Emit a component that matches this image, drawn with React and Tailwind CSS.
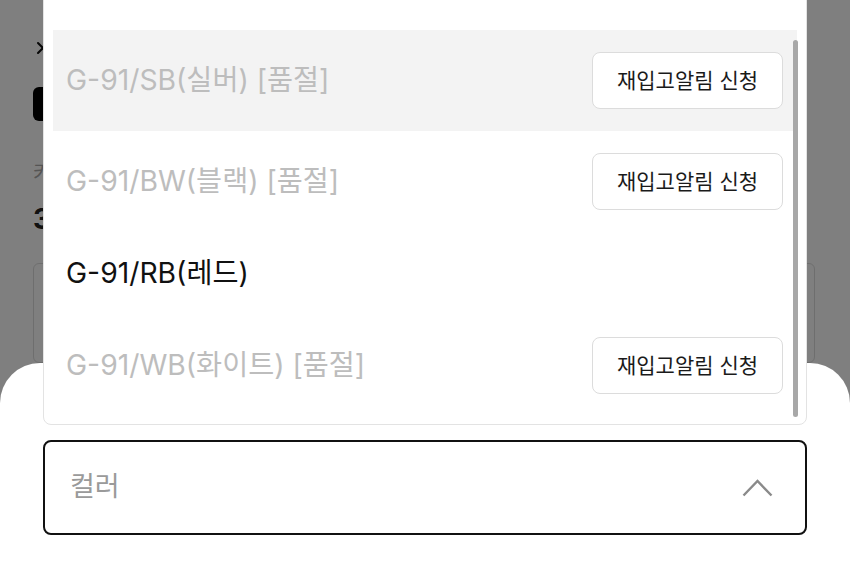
import React from "react";
import { X } from "lucide-react";

const rows = [
  { label: "G-91/SB(실버) [품절]", soldOut: true, active: true },
  { label: "G-91/BW(블랙) [품절]", soldOut: true },
  { label: "G-91/RB(레드)", soldOut: false },
  { label: "G-91/WB(화이트) [품절]", soldOut: true },
];

function Row({ row }) {
  if (!row.soldOut) {
    return (
      <div className="flex h-[83px] items-center pl-[13px] pr-[14px]">
        <span className="text-[28.3px] leading-none text-[#111]">{row.label}</span>
      </div>
    );
  }
  return (
    <div
      className={
        row.active
          ? "flex h-[101px] items-center justify-between pl-[13px] pr-[14px] bg-[#f3f3f3]"
          : "flex h-[101px] items-center justify-between pl-[13px] pr-[14px]"
      }
    >
      <span className="text-[28.3px] leading-none text-[#bdbdbd]">{row.label}</span>
      <button className="flex h-[57px] w-[191px] items-center justify-center rounded-[8px] border border-[#dcdcdc] bg-white text-[21px] text-[#1a1a1a]">
        재입고알림 신청
      </button>
    </div>
  );
}

export default function App() {
  return (
    <div
      className="relative h-[570px] w-[850px] overflow-hidden bg-white"
      style={{ fontFamily: 'Inter, "Noto Sans CJK KR", sans-serif' }}
    >
      {/* page content behind the overlay */}
      <div className="flex flex-col items-start px-[33px] pt-[38px]">
        <X size={20} strokeWidth={2.5} className="text-[#111]" />
        <div className="mt-[29px] h-[34px] w-[120px] rounded-[6px] bg-black" />
        <div className="mt-[40px] text-[20px] leading-[24px] text-[#aaa]">카</div>
        <div className="mt-[18px] text-[28px] font-bold leading-[32px] text-[#222]">3</div>
        <div className="mt-[28px] h-[100px] w-[782px] rounded-[6px] border border-[#ddd] bg-white" />
      </div>

      {/* dim overlay */}
      <div className="absolute inset-0 bg-black/50" />

      {/* bottom sheet */}
      <div className="absolute inset-x-0 bottom-0 h-[207px] rounded-t-[40px] bg-white px-[43px] pt-[77px]">
        <div className="relative">
          {/* dropdown options */}
          <div className="absolute bottom-[calc(100%+15px)] left-0 right-0 rounded-[8px] border border-[#e3e3e3] bg-white px-[9px] pb-[8px] pt-[39px]">
            {rows.map((r) => (
              <Row key={r.label} row={r} />
            ))}
            <div className="absolute bottom-[7px] right-[8px] top-[49px] w-[5px] rounded-full bg-[#a8a8a8]" />
          </div>

          {/* select */}
          <div className="flex h-[95px] items-center justify-between rounded-[8px] border-2 border-[#111] pl-[25px] pr-[32px]">
            <span className="text-[27px] text-[#9a9a9a]">컬러</span>
            <svg width="31" height="19" viewBox="0 0 31 19" fill="none">
              <path d="M1.5 17.5 L15.5 3 L29.5 17.5" stroke="#8a8a8a" strokeWidth="2.4" />
            </svg>
          </div>
        </div>
      </div>
    </div>
  );
}
